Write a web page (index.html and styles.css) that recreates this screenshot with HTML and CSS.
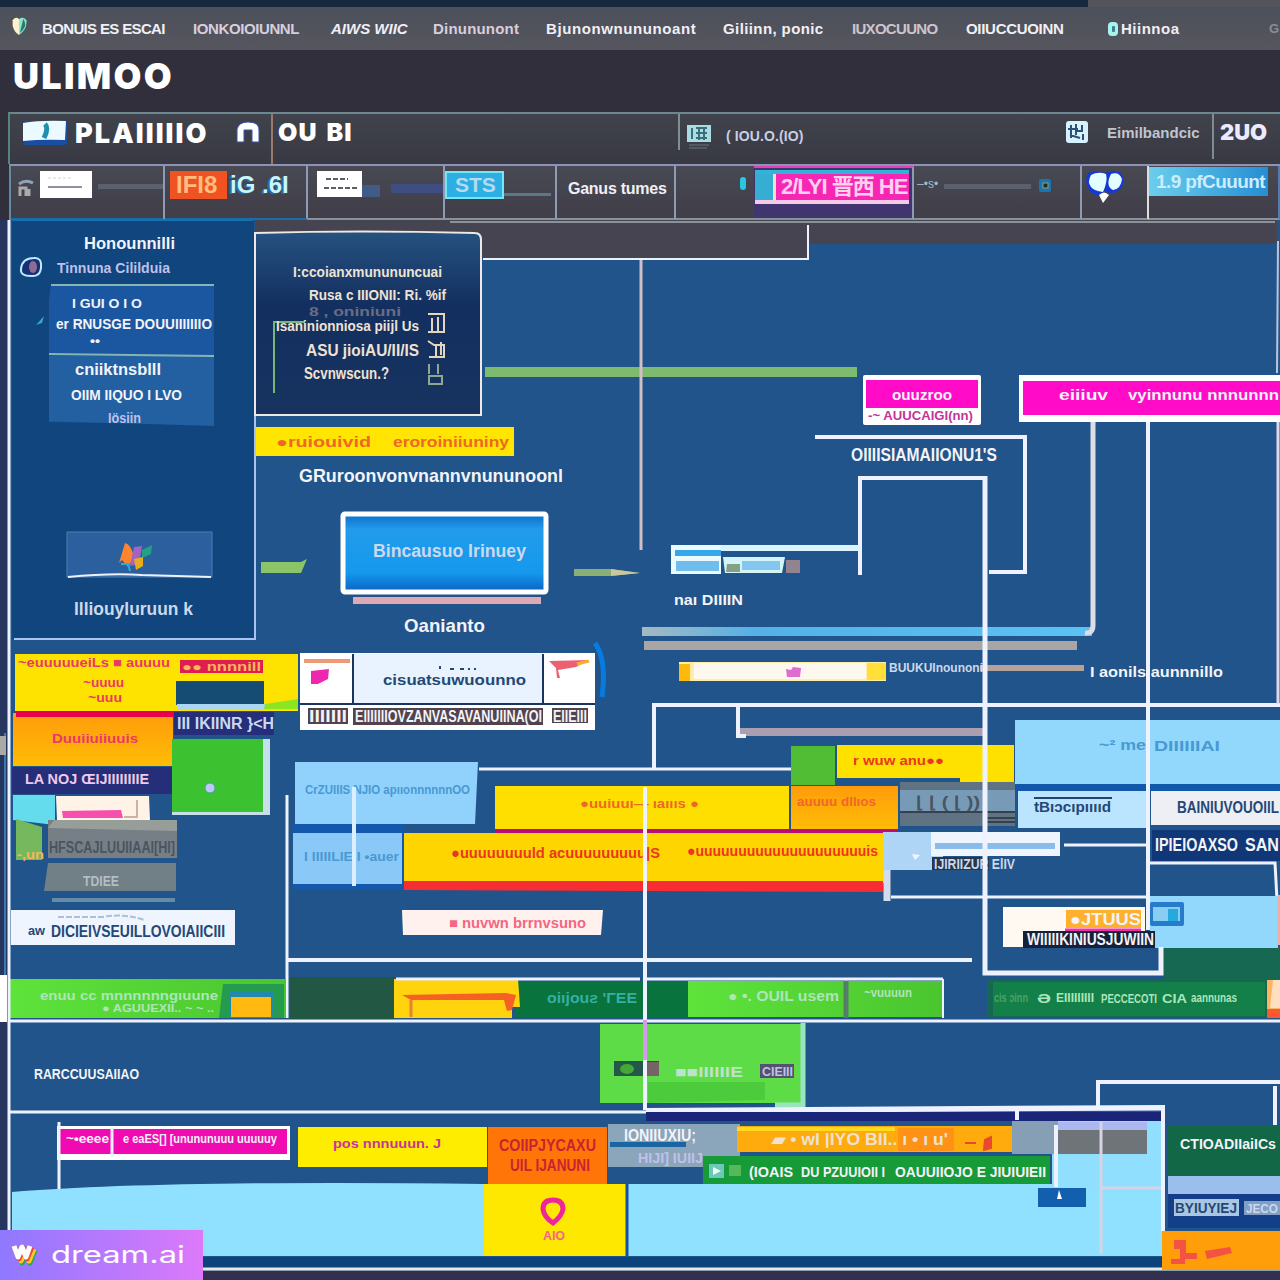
FILE: index.html
```html
<!DOCTYPE html>
<html lang="en">
<head>
<meta charset="utf-8">
<title>Ulimoo</title>
<link rel="stylesheet" href="styles.css">
<script src="labels.js" defer></script>
</head>
<body>
<div class="page">
<div class="strip"></div>
<nav class="nav">
  <span class="n0"><svg width="15" height="19" viewBox="0 0 13 18"><path d="M0 3Q3-1 6 2V17Q1 14 0 8Z" fill="#fff1cf"/><path d="M6 2Q10-1 13 3Q14 12 6 17Z" fill="#8ee5ce"/><path d="M10 2Q15 8 7 15Z" fill="#237b73"/></svg></span>
  <span class="n1">BONUIS ES ESCAI</span><span class="n2">IONKOIOIUNNL</span><span class="n3">AIWS WIIC</span><span class="n4">Dinununont</span><span class="n5">Bjunonwnununoant</span><span class="n6">Giliinn, ponic</span><span class="n7">IUXOCUUNO</span><span class="n8">OIIUCCUOINN</span>
  <span class="n9"><svg width="10" height="14" viewBox="0 0 10 14"><rect width="10" height="14" rx="4" fill="#a6f4ef"/><rect x="4" y="4" width="3" height="6" rx="1" fill="#3d8292"/></svg>Hiinnoa</span><span class="n10">G</span>
</nav>
<header class="brand">ULIMOO</header>
<section class="toolbar">
  <div class="tools-left">
    <svg width="47" height="26" viewBox="0 0 47 26"><rect x="3" y="1" width="44" height="24" rx="3" fill="#184da2"/><path d="M3 3Q20 0 46 1L45 20Q22 19 3 21Z" fill="#eafaff"/><path d="M25 4Q29 8 24 18" fill="none" stroke="#218eb0" stroke-width="5"/></svg>
    <b class="plan">PLAIIIIIO</b>
    <svg class="arch" width="24" height="24" viewBox="0 0 24 24"><path d="M1 21V8Q3 1 12 1Q24 1 23 10V21H16V9H8V21Z" fill="#fff" stroke="#3654a5" stroke-width="1"/></svg>
  </div>
  <div class="tools-mid"><b>OU</b> <b>BI</b></div>
  <div class="search">
    <svg width="24" height="26" viewBox="0 0 24 26"><rect y="2" width="24" height="17" fill="#a9dbe3"/><path d="M5 5V16M9 5H20M9 10H20M9 15H20M12 4V17M17 4V17" stroke="#3b6e79" stroke-width="2"/><path d="M2 22H22M2 25H20" stroke="#69777d"/></svg>
    <span>( IOU.O.(IO)</span>
  </div>
  <div class="account">
    <svg width="24" height="24" viewBox="0 0 24 24"><rect x="1" y="1" width="22" height="22" rx="3" fill="#d9f1ff"/><path d="M6 5V18M3 9H13M11 4V15M17 5V11H10M18 14V20M5 15L15 18" fill="none" stroke="#2a5278" stroke-width="2"/></svg>
    <span>Eimilbandcic</span>
  </div>
  <div class="count">2UO</div>
</section>
<section class="tabs">
  <div class="tab t1"><svg width="16" height="18" viewBox="0 0 16 18"><path d="M1 5Q8 0 15 4" stroke="#91a3b9" stroke-width="3" fill="none"/><path d="M2 17V9H8V17M11 10V17" stroke="#ada8aa" stroke-width="3" fill="none"/></svg><svg width="52" height="27"><rect width="52" height="27" fill="#fff"/><path d="M8 7H33" stroke="#d5d5d8" stroke-dasharray="3 2"/><path d="M8 16H42" stroke="#8f939e" stroke-width="2"/></svg><i class="rail"></i></div>
  <div class="tab t2"><b class="hot">IFI8</b><b class="cold">iG .6I</b></div>
  <div class="tab t3"><svg width="45" height="26"><rect width="45" height="26" fill="#fff"/><path d="M9 8H31M7 17H40" stroke="#5b5d69" stroke-width="2" stroke-dasharray="5 2"/></svg><i class="smear"></i><i class="rail blue"></i></div>
  <div class="tab t4"><b>STS</b><i class="rail teal"></i></div>
  <div class="tab t5"><b>Ganus tumes</b></div>
  <div class="tab t6"><i class="dot"></i></div>
  <div class="tab t7"><div class="promo"><i></i><b>2/LYI 晋西 HE</b></div></div>
  <div class="tab t8"><span>–•s•</span><i class="rail"></i><svg width="12" height="13"><rect width="12" height="13" rx="2" fill="#1676b2"/><rect x="4" y="4" width="5" height="5" fill="#19283d" stroke="#b79e4c"/></svg></div>
  <div class="tab t9"><svg width="40" height="34" viewBox="0 0 40 34"><path d="M3 3Q10 0 19 3Q28-1 36 3Q43 15 31 22Q25 25 20 20Q15 29 7 23Q-2 14 3 3Z" fill="#1538d7"/><path d="M6 5Q13 1 21 4Q23 11 18 22Q9 21 6 17Q2 12 6 5ZM26 4Q34 1 37 9Q36 19 28 20Q20 16 26 4Z" fill="#e4ffff"/><path d="M14 25Q19 20 24 25L18 33Z" fill="#fff"/></svg></div>
  <div class="tab t10"><b>1.9 pfCuuunt</b></div>
</section>
<main class="board">
<svg class="canvas" width="1280" height="1060" viewBox="0 220 1280 1060">
  <defs>
    <linearGradient id="card" x1="0" y1="0" x2="0" y2="1"><stop offset="0" stop-color="#25527f"/><stop offset=".4" stop-color="#132f60"/><stop offset="1" stop-color="#17335f"/></linearGradient>
    <linearGradient id="blue" x1="0" y1="0" x2="0" y2="1"><stop offset="0" stop-color="#0870c9"/><stop offset=".2" stop-color="#239bea"/><stop offset=".75" stop-color="#1499ee"/><stop offset="1" stop-color="#0b61c0"/></linearGradient>
    <linearGradient id="dream"><stop offset="0" stop-color="#8f78ff"/><stop offset="1" stop-color="#dc79fa"/></linearGradient>
    <linearGradient id="sky"><stop offset="0" stop-color="#a5b9c2"/><stop offset=".25" stop-color="#54b1e6"/><stop offset="1" stop-color="#5bc2f3"/></linearGradient>
    <linearGradient id="grn"><stop offset="0" stop-color="#5ee33b"/><stop offset="1" stop-color="#4ac52f"/></linearGradient>
    <linearGradient id="amber" x1="0" y1="0" x2="0" y2="1"><stop offset="0" stop-color="#ff9b0c"/><stop offset="1" stop-color="#ffbd05"/></linearGradient>
  </defs>
  <rect y="220" width="1280" height="1060" fill="#20548a"/>
  <path d="M255 220H1277V244H809V258H482V234H255Z" fill="#464450"/>
  <path d="M483 259H808V225" class="w2"/>
  <path d="M450 222H1275" stroke="#8b9299" stroke-width="2"/>

  <!-- sidebar -->
  <rect x="12" y="221" width="242" height="418" fill="#10457d"/>
  <path d="M12 220H252" stroke="#1770ae" stroke-width="2"/>
  <path d="M14 639H255V234" class="p2"/>
  <g class="t white"><text x="84" y="249" class="s16" textLength="91">Honounnilli</text><text x="57" y="273" class="s15 lilac" textLength="113">Tinnuna Cililduia</text></g>
  <path d="M21 269Q22 258 34 258Q42 257 41 268Q40 277 31 276Q20 276 21 269Z" fill="#193076" stroke="#bdebff" stroke-width="2"/><ellipse cx="33" cy="267" rx="4" ry="6" fill="#8d6b92"/>
  <path d="M51 284H214V425L49 422V300Z" fill="#1b57a0"/><path d="M49 356H214V426L49 421Z" fill="#2260a2"/>
  <path d="M51 285H214M49 354L214 356" stroke="#85b4b3" stroke-width="2"/>
  <path d="M36 325L44 316L42 323Z" fill="#32a5d5"/>
  <g class="t white"><text x="72" y="308" class="s13" textLength="70">I GUI O I O</text><text x="56" y="329" class="s14" textLength="156">er RNUSGE DOUUIIIIIIIO</text><text x="90" y="345" class="s12" textLength="10">••</text><text x="75" y="375" class="s16" textLength="86">cniiktnsblll</text><text x="71" y="400" class="s14" textLength="111">OIIM IIQUO I LVO</text><text x="108" y="423" class="s14 lilac" textLength="33">Iösiin</text></g>
  <rect x="67" y="532" width="145" height="45" fill="#2b5f9e" stroke="#4b7eb2"/><path d="M68 577Q110 573 142 575L211 577" class="w2"/>
  <path d="M125 543Q131 544 134 557L128 567L122 560L119 563Z" fill="#ff8430"/><path d="M134 547L142 546L139 564L130 566Z" fill="#a164c3"/><path d="M142 550L152 545L151 554L142 558Z" fill="#24a184"/><path d="M134 559L143 557V566L136 570Z" fill="#e7ac1d"/><path d="M121 564H128L130 571" stroke="#2baed5" stroke-width="2" fill="none"/>
  <text x="74" y="615" class="t s18 pale" textLength="119">llliouyluruun k</text>

  <!-- recommendation card -->
  <path d="M255 233Q360 230 475 233Q481 233 481 240V415H255Z" fill="url(#card)" stroke="#eee9e4" stroke-width="2"/>
  <path d="M274 393V322H305" fill="none" stroke="#78b877" stroke-width="2"/>
  <g class="t cream"><text x="293" y="277" class="s14" textLength="149">I:ccoianxmunununcuai</text><text x="309" y="300" class="s15" textLength="137">Rusa c IIIONII: Ri. %if</text><text x="309" y="316" class="s12 dim" textLength="92">8 , oniniuni</text><text x="276" y="331" class="s14" textLength="143">Isaninionniosa piijl Us</text><text x="306" y="356" class="s16" textLength="113">ASU jioiAU/II/IS</text><text x="304" y="379" class="s16" textLength="85">Scvnwscun.?</text></g>
  <g fill="none" stroke="#e3d6bd" stroke-width="2"><path d="M428 314H444V332H428M432 318V332M438 317V332M428 341L434 345H444V357H429M436 345V357M441 342V355"/><path d="M429 364V374M438 364V374M429 376H442V384H429Z" stroke="#91a68f"/></g>

  <rect x="485" y="367" width="372" height="10" fill="#7fbb6e"/>
  <path d="M641 260V550" stroke="#d1bfc8" stroke-width="3"/>
  <rect x="256" y="427" width="258" height="29" fill="#ffe500"/>
  <g class="t orange s14"><text x="276" y="447" textLength="95">●ruiouivid</text><text x="393" y="447" textLength="116">eroroiniiuniny</text></g>
  <text x="299" y="482" class="t s19 white" textLength="264">GRuroonvonvnannvnununoonl</text>
  <path d="M261 562H301L307 559L301 573H261Z" fill="#8cc469"/><path d="M574 569H610L640 573L610 576H574Z" fill="#8baf72"/><path d="M611 569L640 573L611 576Z" fill="#cac79c"/>
  <rect x="343" y="514" width="203" height="78" rx="2" fill="url(#blue)" stroke="#fff" stroke-width="5"/>
  <path d="M353 597H541V604H353Z" fill="#dfa9b4"/><text x="373" y="557" class="t s18 pale" textLength="153">Bincausuo Irinuey</text><text x="404" y="632" class="t s19 white" textLength="81">Oanianto</text>
  <path d="M595 643Q607 660 602 697" stroke="#087be0" stroke-width="5" fill="none"/>

  <!-- campaign nodes -->
  <rect x="863" y="375" width="118" height="50" rx="2" fill="#fff"/><rect x="866" y="380" width="112" height="28" fill="#ff0bc8"/>
  <text x="892" y="400" class="t s14 white" textLength="60">ouuzroo</text><text x="868" y="420" class="t s13 magenta" textLength="105">-~ AUUCAIGI(nn)</text>
  <rect x="1019" y="375" width="261" height="47" fill="#fff"/><rect x="1023" y="381" width="257" height="34" fill="#ff0bc8"/>
  <g class="t s14 white"><text x="1059" y="400" textLength="49">eiiiuv</text><text x="1128" y="400" textLength="151">vyinnunu nnnunnn</text></g>
  <text x="851" y="461" class="t s18 white" textLength="146">OIIIISIAMAIIONU1'S</text>
  <path d="M815 437H1025V572H989" class="w4"/><path d="M860 575V478H985" class="w4"/>
  <rect x="642" y="627" width="450" height="9" fill="url(#sky)"/><rect x="644" y="641" width="433" height="9" fill="#aaa5a5"/>
  <path d="M1093 422V625Q1093 634 1085 633" stroke="#dedce5" stroke-width="5" fill="none"/>
  <path d="M673 548H860" stroke="#d8f5ff" stroke-width="6"/><rect x="671" y="545" width="50" height="29" fill="#eafaff"/><rect x="675" y="550" width="46" height="6" fill="#37a6eb"/><rect x="676" y="561" width="43" height="10" fill="#70bcec"/><path d="M723 557H785L782 573H725Z" fill="#d5f4f5"/><path d="M727 564H740V572H726Z" fill="#84a187"/><path d="M742 561H780V570H742Z" fill="#84c6ef"/><rect x="786" y="560" width="14" height="13" fill="#91848e"/>
  <text x="674" y="605" class="t s14 white" textLength="69">naı DIIIIN</text>
  <rect x="679" y="662" width="207" height="19" fill="#ffedaa"/><rect x="679" y="664" width="11" height="17" fill="#ffb80c"/><rect x="694" y="663" width="172" height="16" fill="#fff8ef"/><rect x="867" y="663" width="19" height="17" fill="#ffdf38"/><path d="M786 669L791 670L793 667L801 668L800 677H787Z" fill="#df6cd0"/>
  <rect x="980" y="665" width="104" height="6" fill="#b4a399"/><text x="889" y="672" class="t s13 pale" textLength="94">BUUKUInounoni</text><text x="1090" y="677" class="t s14 white" textLength="133">I aonils aunnnillo</text>

  <!-- left notes -->
  <rect x="15" y="654" width="283" height="57" fill="#ffe300"/><rect x="176" y="681" width="88" height="24" fill="#154c73"/><path d="M177 707H298" stroke="#a8d6f3" stroke-width="6"/><path d="M265 704L298 699V709H264Z" fill="#8ce522"/>
  <rect x="13" y="713" width="160" height="53" fill="url(#amber)"/><rect x="16" y="712" width="158" height="5" fill="#e8004d"/>
  <g class="t s13 rose"><text x="18" y="667" textLength="152">~euuuuueiLs ■ auuuu</text><rect x="180" y="660" width="83" height="13" fill="#df1e4f"/><text x="83" y="687" textLength="41">~uuuu</text><text x="88" y="702" textLength="34">~uuu</text><text x="52" y="743" textLength="86">Duuiiuiiuuis</text></g><text x="182" y="671" class="t s12 yellow" textLength="79">●● nnnnill</text>
  <rect x="174" y="712" width="100" height="23" fill="#252e7b"/><text x="177" y="729" class="t s16 pale" textLength="97">III IKIINR }&lt;H</text>
  <rect x="12" y="767" width="160" height="27" fill="#242e79"/><text x="25" y="784" class="t s15 pinkish" textLength="124">LA NOJ ŒIJIIIIIIIIE</text>
  <rect x="172" y="739" width="98" height="76" fill="#c6dfed"/><rect x="172" y="739" width="91" height="73" fill="#3cc231"/><circle cx="210" cy="788" r="5" fill="#bdc9f6" stroke="#4b9d9d"/>
  <path d="M13 795H55V825L13 820Z" fill="#65dced"/><path d="M56 796H149L150 820H57Z" fill="#fff2e6"/><path d="M62 811L121 810L123 818H63Z" fill="#f74fae"/><path d="M137 800V817H124" stroke="#c9b4a4" stroke-width="2" fill="none"/>
  <path d="M16 819L42 827V860H16Z" fill="#75b85d"/><text x="17" y="859" class="t s12 yellow" textLength="27">-,un</text>
  <rect x="48" y="820" width="129" height="38" fill="#777f86"/><path d="M54 820H177V831L48 828Z" fill="#979d99"/><text x="49" y="853" class="t s16 slate" textLength="126">HFSCAJLUUIIAAI[HI]</text>
  <path d="M48 863H176V891H44Z" fill="#718087"/><path d="M52 900H175" stroke="#668ba8" stroke-width="4"/><text x="83" y="886" class="t s15 slatepale" textLength="36">TDIEE</text>
  <rect x="11" y="910" width="224" height="35" fill="#eef5ff"/><path d="M58 917H102Q125 913 144 920" stroke="#aebfce" stroke-dasharray="6 2" stroke-width="2" fill="none"/><text x="28" y="935" class="t s12 navy" textLength="17">aw</text><text x="51" y="937" class="t s16 navy" textLength="174">DICIEIVSEUILLOVOIAIICIII</text>

  <!-- centre notes -->
  <rect x="300" y="653" width="295" height="77" fill="#fff"/><rect x="354" y="654" width="188" height="49" fill="#e9f3ff"/><path d="M353 654V704M543 654V704M300 704H595" stroke="#1b3563" stroke-width="2"/>
  <path d="M304 661H350" stroke="#eb9a74" stroke-width="4"/><path d="M311 671L329 669L328 679L318 684H311Z" fill="#ef27af"/><path d="M549 661L589 660L576 667L558 670L560 678H557L556 668Z" fill="#ed6072"/><path d="M577 664L589 661" stroke="#f5b12c" stroke-width="3"/>
  <text x="383" y="685" class="t s15 navy" textLength="143">cisuatsuwuounno</text><path d="M440 666V669M450 669H454M460 669H464M468 669H470M474 669H476" stroke="#244875" stroke-width="2"/>
  <g fill="#51424d"><rect x="308" y="708" width="40" height="16"/><rect x="353" y="708" width="190" height="17"/><rect x="552" y="708" width="36" height="15"/></g>
  <g class="t s16 white"><text x="309" y="722" textLength="38">IIIIIII</text><text x="355" y="722" textLength="187">EIIIIIIIOVZANVASAVANUIINA(OI</text><text x="553" y="722" textLength="34">EIIEIII</text></g>
  <path d="M479 769H792" class="w3"/>
  <path d="M293 822H404V890H293Z" fill="#1458ae"/><path d="M295 762H478L475 824H295Z" fill="#90d2fb"/><rect x="293" y="833" width="109" height="51" fill="#8ac9f7"/>
  <g class="t s13 bluefade"><text x="305" y="794" textLength="165">CrZUIIIS NJIO apııonnnnnnOO</text><text x="304" y="861" textLength="95">I IIIIILIE I •auer</text></g>
  <rect x="495" y="786" width="294" height="43" fill="#ffdf00"/><rect x="791" y="786" width="107" height="43" fill="url(#amber)"/><path d="M495 831H898" stroke="#b90e77" stroke-width="4"/>
  <rect x="404" y="833" width="480" height="50" fill="#ffd500"/><path d="M404 881H883V892L404 890Z" fill="#f62d32"/>
  <g class="t s13 orange"><text x="580" y="808" textLength="119">●uuiuuı— ıaıııs ●</text><text x="797" y="806" textLength="79">auuuu dllıos</text></g><g class="t s15 red"><text x="451" y="858" textLength="209">●uuuuuuuuld acuuuuuuuuu|S</text><text x="687" y="856" textLength="191">●uuuuuuuuuuuuuuuuuuuuis</text></g>
  <path d="M402 910H603L601 935H403Z" fill="#fff2ee"/><text x="449" y="928" class="t s14 coral" textLength="137">■ nuvwn brrnvsuno</text>
  <path d="M354 787V886" stroke="#dceeff" stroke-width="4"/><path d="M287 795V1018" class="w3"/><path d="M288 960H972" class="w4"/>

  <!-- right notes -->
  <rect x="791" y="746" width="44" height="39" fill="#51bd35"/><rect x="837" y="745" width="177" height="33" fill="#ffe100"/><rect x="960" y="745" width="54" height="37" fill="#ffe100"/><text x="853" y="765" class="t s13 red" textLength="91">r wuw anu●●</text>
  <path d="M740 732H985" stroke="#aa9eb0" stroke-width="8"/><path d="M654 768V705H1280M738 706V736H746" class="w4"/>
  <rect x="900" y="782" width="115" height="44" fill="#5f7382"/><path d="M900 790H1015V811H900Z" fill="#779bb6"/><path d="M900 812H1015M987 818H1015M987 822H1015" stroke="#34424f" stroke-width="2"/><text x="916" y="808" class="t s16 slate" textLength="64">⌊ ⌊ ( ⌊ ))</text>
  <rect x="1015" y="720" width="265" height="64" fill="#91d8fc"/><rect x="1015" y="784" width="265" height="7" fill="#1258aa"/><rect x="1018" y="791" width="130" height="37" fill="#bbe4ff"/><rect x="1151" y="791" width="129" height="34" fill="#eeeff5"/>
  <text x="1099" y="750" class="t s14 bluefade" textLength="47">~² me</text><text x="1154" y="751" class="t s14 bluefade" textLength="66">DIIIIIIAI</text><path d="M1034 798H1112" stroke="#24436d" stroke-width="2"/><text x="1034" y="812" class="t s14 navy" textLength="77">tBıɔcıpııııd</text><text x="1177" y="813" class="t s16 navy" textLength="102">BAINIUVOUOIIL</text>
  <rect x="1152" y="830" width="128" height="31" fill="#103777"/><text x="1155" y="851" class="t s18 white" textLength="83">IPIEIOAXSO</text><text x="1245" y="851" class="t s18 white" textLength="34">SAN</text>
  <rect x="883" y="832" width="60" height="38" fill="#aed5f6"/><rect x="931" y="832" width="129" height="24" fill="#eef5ff"/><path d="M935 846H1055" stroke="#8abbe9" stroke-width="6"/><path d="M912 854L920 855L915 860Z" fill="#f2f4ff"/><rect x="932" y="857" width="57" height="13" fill="#29364b"/><text x="934" y="869" class="t s14 pale" textLength="81">IJIRIIZUR ElIV</text>
  <path d="M887 870V901" stroke="#d2dcec" stroke-width="7"/><path d="M891 897H1148M1064 845H1148M1148 863H1275L1277 900" class="w3"/>
  <rect x="1150" y="896" width="128" height="52" fill="#91d8fc"/><path d="M1164 948H1280V1018H987V980H1164Z" fill="#176852"/><rect x="993" y="982" width="272" height="34" fill="#128048"/>
  <rect x="1003" y="907" width="142" height="40" fill="#fff9f2"/><rect x="1066" y="910" width="75" height="18" fill="#ffb02e"/><text x="1070" y="925" class="t s16 white" textLength="71">●JTUUS</text><path d="M1065 930H1141" stroke="#f62ca8" stroke-width="3"/><rect x="1023" y="931" width="132" height="17" fill="#15203b"/><text x="1027" y="945" class="t s16 white" textLength="127">WIIIIIKINIUSJUWIIN</text>
  <rect x="1150" y="902" width="34" height="24" rx="2" fill="#277bcb"/><rect x="1153" y="907" width="27" height="14" fill="#88cef3"/><rect x="1168" y="909" width="10" height="12" fill="#24aadf"/><path d="M1280 895V945" stroke="#f1ad9f" stroke-width="5"/>
  <path d="M985 476V973H1161V947" class="w5"/><path d="M1148 422V930" class="w4"/><path d="M1278 422V704" stroke="#ddd9e9" stroke-width="3"/><path d="M1278 241L1277 373" stroke="#b8c3dd" stroke-width="2"/>

  <!-- green lane -->
  <rect x="290" y="977" width="105" height="43" fill="#225744"/><rect x="515" y="981" width="174" height="37" fill="#09733d"/><path d="M10 979H286V1018H8Z" fill="url(#grn)"/><path d="M223 984H284V1018H219Z" fill="#259b50"/><rect x="229" y="991" width="44" height="25" fill="#2188ae"/><rect x="231" y="997" width="40" height="20" fill="#ffb910"/>
  <text x="40" y="1000" class="t s13 mint" textLength="178">enuu cc mnnnnnngıuune</text><text x="102" y="1012" class="t s11 mint" textLength="112">● AGUUEXII.. ~ ~ ..</text>
  <path d="M394 979H518L520 1007H512V1018H394Z" fill="#ffd30d"/><path d="M402 995L506 993L516 995L512 1010L507 1011L504 1000H411" fill="#f66024"/><path d="M411 1000V1017" stroke="#ed7f30" stroke-width="3"/><text x="547" y="1003" class="t s15 tealtext" textLength="90">oiıjouƨ 'ΓEE</text>
  <rect x="688" y="981" width="256" height="36" fill="url(#grn)"/><path d="M846 980V1018" stroke="#557d69" stroke-width="5"/><path d="M943 979V1018" class="w2"/><text x="728" y="1001" class="t s14 mint" textLength="111">● •. OUIL usem</text><text x="864" y="997" class="t s12 mint" textLength="48">~vuuuun</text>
  <g class="t s12 mint"><text x="994" y="1002" class="darkmint" textLength="34">cis ɔinn</text><text x="1037" y="1003" textLength="14">Ə</text><text x="1056" y="1002" textLength="38">EIIIIIIIII</text><text x="1101" y="1003" textLength="56">PECCECOTI</text><text x="1162" y="1003" textLength="25">CIA</text><text x="1191" y="1002" textLength="46">aannunas</text></g><rect x="1267" y="980" width="13" height="38" fill="#ffb25f"/><path d="M1273 980H1280V1008H1270Z" fill="#ffdfbf"/><path d="M1267 1009H1280V1018H1267Z" fill="#fa5930"/>
  <path d="M396 979H640M646 979H943" class="w3"/><path d="M8 1021H1280M10 1112H645L1165 1109" class="w3"/>
  <rect x="600" y="1024" width="203" height="79" fill="#5ddc48"/><path d="M648 1082H765V1100L648 1103Z" fill="#4ccc3d"/><path d="M803 1023V1105H775" stroke="#9ae5bf" stroke-width="5" fill="none"/><rect x="614" y="1061" width="45" height="15" fill="#245649"/><ellipse cx="627" cy="1069" rx="7" ry="5" fill="#45a735"/><rect x="645" y="1062" width="14" height="14" fill="#756465"/><text x="675" y="1077" class="t s15 palegreen" textLength="68">■■IIIIIIE</text><rect x="760" y="1064" width="34" height="14" fill="#53516e"/><text x="762" y="1076" class="t s12 lilac" textLength="31">CIEIII</text>
  <path d="M645 787V1110" class="w4"/><path d="M645 1020V1060" stroke="#d59bea" stroke-width="4"/><text x="34" y="1079" class="t s14 white" textLength="105">RARCCUUSAIIAO</text>

  <!-- lower board -->
  <path d="M12 1192Q160 1180 484 1184H1165V1256H12Z" fill="#90e0ff"/><path d="M1052 1121H1165V1190H1052Z" fill="#90dfff"/><path d="M12 1257H1165V1268H12Z" fill="#0b437d"/><rect y="1271" width="1280" height="9" fill="#322f50"/><path d="M0 1269H1280" stroke="#ebe9d9" stroke-width="3"/>
  <rect x="57" y="1126" width="233" height="34" fill="#fff"/><rect x="60" y="1129" width="227" height="25" fill="#ef0bb1"/><path d="M59 1122V1189M112 1128V1157" class="w3"/><g class="t s12 white"><text x="66" y="1143" textLength="43">~•eeee</text><text x="123" y="1143" textLength="154">e eaES[] [unununuuu uuuuuy</text></g>
  <path d="M298 1127H487V1167H298Z" fill="#ffed00"/><text x="333" y="1148" class="t s13 magenta" textLength="108">pos nnnuuun. J</text><rect x="488" y="1127" width="119" height="57" fill="#ff7508"/><g class="t s16 deepred"><text x="499" y="1151" textLength="97">COIIPJYCAXU</text><text x="510" y="1171" textLength="80">UIL IJANUNI</text></g>
  <rect x="484" y="1184" width="143" height="72" fill="#ffe800"/><path d="M543 1209Q543 1200 553 1200Q563 1200 563 1209Q562 1216 553 1223Q544 1217 543 1209Z" fill="none" stroke="#ed2699" stroke-width="5"/><text x="543" y="1240" class="t s13 coral" textLength="22">AIO</text><path d="M627 1184V1257" stroke="#1451a0" stroke-width="3"/>
  <path d="M608 1124H740V1156H703V1167H608Z" fill="#8ba5ba"/><rect x="610" y="1142" width="76" height="5" fill="#1c65a3"/><text x="624" y="1141" class="t s16 white" textLength="72">IONIIUXIU;</text><text x="638" y="1163" class="t s15 lilac" textLength="65">HIJI] IUIIJ</text>
  <rect x="737" y="1126" width="275" height="26" fill="#ffaa0d"/><path d="M737 1127H895V1131H737Z" fill="#ffda1f"/><rect x="898" y="1128" width="56" height="23" fill="#ff9215"/><text x="772" y="1145" class="t s16 cream" textLength="176">▰ • wI |IYO BIl.. ı • ı u'</text><path d="M965 1143H976M985 1140L991 1137V1148L984 1150Z" stroke="#ec482d" stroke-width="2" fill="#ec482d"/>
  <path d="M1012 1121H1058V1154H1012Z" fill="#879fb5"/><path d="M1058 1123H1147V1154H1058Z" fill="#6f7478"/><path d="M1058 1122H1147V1130H1058Z" fill="#aab8ef"/><path d="M703 1156H1050V1184H703Z" fill="#179a38"/><rect x="709" y="1164" width="15" height="14" fill="#6dc8bc"/><path d="M713 1167L721 1171L713 1175Z" fill="#eaffee"/><rect x="729" y="1165" width="12" height="11" fill="#54b958"/>
  <g class="t s15 white"><text x="749" y="1177" textLength="44">(IOAIS</text><text x="801" y="1177" textLength="84">DU PZUUIOII I</text><text x="895" y="1177" textLength="151">OAUUIIOJO E JIUIUIEII</text></g>
  <path d="M646 1112H1165V1121H646Z" fill="#1a257a"/><path d="M646 1110L1163 1107V1231M1017 1110V1120M1056 1125V1187M1098 1108V1082H1280M1275 1086V1125" class="w4"/><path d="M1101 1122V1254M1102 1188H1161" stroke="#d6d3e2" stroke-width="3"/><rect x="1038" y="1188" width="48" height="19" fill="#1260ad"/><path d="M1059 1190L1062 1199H1057Z" fill="#fff"/>
  <rect x="1168" y="1126" width="112" height="50" fill="#126747"/><text x="1180" y="1149" class="t s14 white" textLength="96">CTIOADIIaiICs</text><rect x="1168" y="1176" width="112" height="18" fill="#9bbfec"/><rect x="1168" y="1194" width="112" height="34" fill="#123f87"/><rect x="1174" y="1199" width="65" height="17" fill="#a9c7e3"/><rect x="1244" y="1201" width="36" height="14" fill="#829fc5"/><text x="1175" y="1213" class="t s15 navy" textLength="62">BYIUYIEJ</text><text x="1246" y="1213" class="t s13 pale" textLength="32">JECO</text>
  <rect x="1162" y="1231" width="118" height="39" fill="#ff9e08"/><path d="M1174 1240H1186V1253H1197V1259H1185V1264H1171V1259H1180V1249H1174ZM1205 1251L1230 1247L1232 1253L1207 1259Z" fill="#f45243"/>

  <!-- board edge -->
  <path d="M0 220H10V1280H0Z" fill="#26365f"/><path d="M9 220V1280" class="w3"/><path d="M5 733V1018" stroke="#387bac" stroke-width="2"/><path d="M0 975H7V1022H0Z" fill="#fff"/><path d="M0 736H6V755H0Z" fill="#aaa9a5"/>
  <rect y="1230" width="203" height="50" fill="url(#dream)"/><g fill="none" stroke-width="5" stroke-linejoin="round"><path d="M18 1250L22 1263L27 1252L30 1263L35 1250" stroke="#27a85a"/><path d="M17 1249L21 1261L26 1250L29 1261L34 1249" stroke="#ffcc27"/><path d="M15 1247L19 1259L24 1248L27 1259L32 1247" stroke="#f04a3a"/><path d="M14 1246L18 1257L22 1247L26 1257L30 1246" stroke="#fff"/></g><text x="51" y="1263" class="dream" textLength="134">dream.ai</text>
</svg>
</main>
</div>
</body>
</html>
```
FILE: labels.js
```js
// Scale glyphs together with their spacing so each label fills its box evenly.
document.querySelectorAll('.canvas text').forEach(function (label) {
  label.setAttribute('lengthAdjust', 'spacingAndGlyphs');
});
```
FILE: styles.css
```css
* { box-sizing: border-box; }
body { margin: 0; background: #302f3b; color: #f0eff5; font-family: "Liberation Sans", "Noto Sans CJK JP", sans-serif; }
.page { width: 1280px; height: 1280px; overflow: hidden; background: linear-gradient(#53545c 0 50px, #302f3b 50px); }
.strip { width: 1088px; height: 7px; background: #17293e; }
.nav { display: grid; grid-template-columns: 30px 151px 138px 102px 113px 177px 129px 114px 142px 161px 23px; height: 43px; padding-left: 12px; align-items: center; font-size: 15px; font-weight: 700; line-height: 18px; white-space: nowrap; background: linear-gradient(#4b505a, #56565e); }
.n0 { line-height: 0; margin-top: -5px; }
.n1 { letter-spacing: -.65px; }
.n2 { letter-spacing: -.4px; color: #d7cedf; }
.n3 { font-style: italic; }
.n4 { color: #dacddd; letter-spacing: .2px; }
.n5 { letter-spacing: .6px; }
.n6 { letter-spacing: .4px; }
.n7 { letter-spacing: -.7px; color: #cfc4cc; }
.n8 { letter-spacing: -.3px; }
.n9 { display: flex; gap: 3px; align-items: center; letter-spacing: .5px; }
.n10 { width: 11px; overflow: visible; color: #8c8d96; font-size: 13px; }
.brand { height: 62px; padding: 6px 0 0 13px; font: 900 36px/41px Inter, sans-serif; letter-spacing: 2.3px; color: #fff; }
.toolbar { display: grid; grid-template-columns: 263px 405px 387px 147px 1fr; height: 52px; margin-left: 8px; border-top: 2px solid #6d8791; border-left: 2px solid #54867b; background: linear-gradient(#40424c, #383943); }
.toolbar > div { display: flex; height: 36px; align-items: center; white-space: nowrap; }
.tools-left { padding-left: 10px; border-right: 2px solid #9b7a69; }
.toolbar > .tools-left { height: 50px; padding-bottom: 12px; }
.plan { width: 153px; padding-left: 8px; font: 900 27px Inter, sans-serif; letter-spacing: 2.1px; color: #fff; }
.arch { margin-left: 16px; }
.tools-mid { gap: 9px; padding-left: 5px; font: 900 25px Inter, sans-serif; letter-spacing: 1px; color: #fff; }
.search { border-left: 2px solid #7f9093; padding: 8px 0 0 7px; gap: 15px; font-size: 14px; font-weight: 700; }
.search span { color: #cbcde5; letter-spacing: .1px; }
.account { gap: 18px; font-size: 15px; font-weight: 700; color: #c1c4ce; }
.toolbar > .count { height: 45px; padding: 0 0 9px 6px; border-left: 2px solid #818c8d; font: 900 22px Inter, sans-serif; color: #eceaff; }
.tabs { display: grid; grid-template-columns: 154px 143px 137px 112px 119px 78px 160px 168px 67px 1fr; height: 56px; margin-left: 9px; border-top: 2px solid #8d92b8; border-left: 2px solid #668b9d; background: linear-gradient(#484953, #403e48); }
.tab { display: flex; align-items: flex-start; height: 54px; padding-top: 5px; border-right: 2px solid #8f9bb5; border-bottom: 2px solid #88929d; overflow: hidden; white-space: nowrap; }
.tab svg { flex: none; }
.t1, .t2 { border-bottom-color: #176eaa; }
.t1 { padding-left: 7px; gap: 6px; }
.t1 svg:first-child { margin-top: 8px; }
.rail { flex: 1; height: 5px; margin-top: 13px; background: #5b606f; }
.blue { height: 9px; margin-left: 11px; background: #3e4e81; }
.teal { height: 3px; margin: 22px 4px 0 0; background: #587a88; }
.t2 { padding-left: 5px; font-size: 24px; line-height: 27px; }
.hot { width: 57px; height: 28px; padding-left: 6px; color: #ffbd80; background: #f05321; }
.cold { width: 74px; padding-left: 3px; color: #c9f5ff; text-shadow: -2px 1px #176fb2; }
.t3 { padding-left: 9px; }
.smear { width: 18px; height: 12px; margin-top: 14px; background: #415b87; }
.t4 b { width: 59px; height: 28px; padding-left: 8px; border: 2px solid #75e6f5; background: #2cb0e4; color: #b9d9ee; font-size: 21px; line-height: 24px; }
.t5 { padding: 14px 0 0 11px; font-size: 16px; letter-spacing: -.25px; }
.t6 { justify-content: flex-end; padding: 11px 8px 0 0; border-right: 0; }
.dot { width: 6px; height: 13px; border-radius: 4px; background: #29c7e6; }
.t7 { padding: 2px 3px 0 1px; background: #41356f; border-top: 2px solid #dd42b6; }
.promo { display: flex; width: 156px; height: 34px; border-top: 4px solid #31b4d8; border-bottom: 4px solid #f7c9e6; background: #f726b5; color: #ffd1ec; font-size: 22px; line-height: 26px; letter-spacing: -1px; }
.promo i { width: 21px; margin-right: 5px; background: #36aed4; border-right: 3px solid #f1dfcf; }
.t8 { padding-left: 3px; color: #a4bbc4; font-size: 12px; }
.t8 span { width: 27px; margin-top: 6px; }
.t8 svg { margin: 8px 29px 0 8px; }
.t9 { padding: 4px 0 0 3px; border-right-color: #ddd; }
.t10 { padding-top: 1px; border-right-color: #527ab5; }
.t10 b { width: 119px; height: 29px; padding-left: 7px; background: linear-gradient(90deg, #6bceed, #258ed3); color: #caedff; font: 700 19px/29px "Liberation Sans", sans-serif; letter-spacing: -.6px; }
.board { height: 1060px; }
.canvas { display: block; }
.w2, .w3, .w4, .w5, .p2 { fill: none; stroke: #eef2ff; }
.w2, .p2 { stroke-width: 2; }
.p2 { stroke: #aac4f0; }
.w3 { stroke-width: 3; }
.w4 { stroke-width: 4; }
.w5 { stroke-width: 5; }
.t { font-weight: 700; }
.s11 { font-size: 11px; }
.s12 { font-size: 12px; }
.s13 { font-size: 13px; }
.s14 { font-size: 14px; }
.s15 { font-size: 15px; }
.s16 { font-size: 16px; }
.s18 { font-size: 18px; }
.s19 { font-size: 19px; }
.white { fill: #f3f3f8; }
.pale { fill: #ccd8ec; }
.lilac { fill: #bfc1ea; }
.cream { fill: #eee2d2; }
.dim { fill: #686d83; }
.orange { fill: #ef6727; }
.magenta { fill: #c5339c; }
.rose { fill: #eb376b; }
.red { fill: #ec3522; }
.yellow { fill: #f7b65d; }
.pinkish { fill: #efc9ed; }
.slate { fill: #4a5461; }
.slatepale { fill: #b3bdc3; }
.navy { fill: #244875; }
.bluefade { fill: #4999d3; }
.coral { fill: #f46682; }
.mint { fill: #afe4bb; }
.darkmint { fill: #4da360; }
.palegreen { fill: #bce2cc; }
.tealtext { fill: #35afa3; }
.deepred { fill: #c82332; }
.dream { font: 400 24px Inter, sans-serif; fill: #fff; }
```
